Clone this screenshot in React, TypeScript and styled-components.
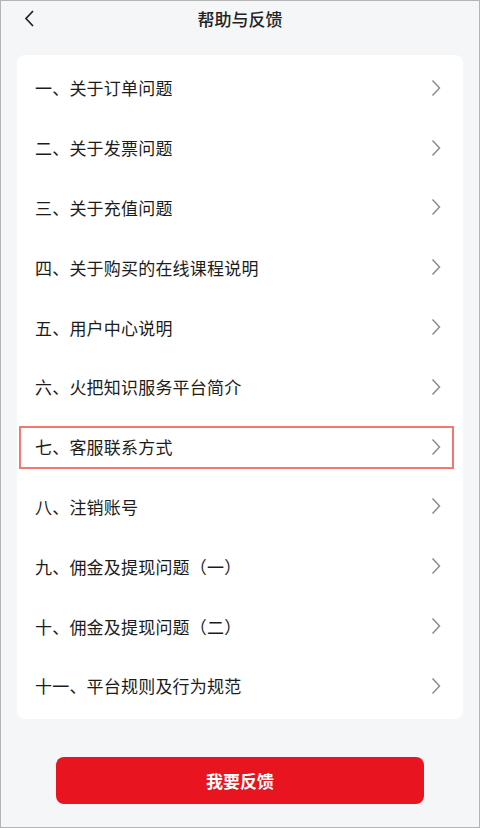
import styled, { createGlobalStyle } from "styled-components";

const GlobalStyle = createGlobalStyle`
  html, body {
    margin: 0;
    padding: 0;
    background: #f5f6f8;
  }
  body {
    font-family: "Noto Sans CJK SC", "Noto Sans", sans-serif;
  }
`;

const Page = styled.div`
  width: 480px;
  height: 828px;
  box-sizing: border-box;
  border: 1px solid #b4b4b4;
  background: #f5f6f8;
  display: flex;
  flex-direction: column;
  overflow: hidden;
`;

const Header = styled.div`
  height: 36px;
  display: flex;
  align-items: center;
  justify-content: center;
  position: relative;
  margin-top: -1px;
`;

const BackBtn = styled.button`
  position: absolute;
  left: 18px;
  top: 7px;
  width: 20px;
  height: 22px;
  border: none;
  background: none;
  padding: 0;
  display: flex;
  align-items: center;
  justify-content: center;
`;

const Title = styled.h1`
  margin: 0;
  font-size: 17px;
  font-weight: 500;
  color: #222;
`;

const Card = styled.ul`
  list-style: none;
  margin: 19px 16px 0 16px;
  padding: 3px 0;
  background: #fff;
  border-radius: 8px;
`;

const Row = styled.li<{ $marked?: boolean }>`
  height: 59.8px;
  display: flex;
  align-items: center;
  justify-content: space-between;
  padding: 0 22px 0 18px;
  position: relative;
  ${(p) =>
    p.$marked &&
    `
    &::after {
      content: "";
      position: absolute;
      left: 2px;
      right: 9px;
      top: 9px;
      bottom: 8px;
      border: 2px solid #f3776f;
    }
  `}
`;

const Label = styled.span`
  font-size: 17px;
  color: #1c1c1c;
  letter-spacing: 0.2px;
`;

const Footer = styled.div`
  display: flex;
  justify-content: center;
  padding-top: 38px;
`;

const SubmitBtn = styled.button`
  width: 368px;
  height: 47px;
  border: none;
  border-radius: 8px;
  background: #e8141f;
  color: #fff;
  font-family: "Noto Sans CJK SC", sans-serif;
  font-size: 17px;
  font-weight: 700;
  cursor: pointer;
`;

const items = [
  "一、关于订单问题",
  "二、关于发票问题",
  "三、关于充值问题",
  "四、关于购买的在线课程说明",
  "五、用户中心说明",
  "六、火把知识服务平台简介",
  "七、客服联系方式",
  "八、注销账号",
  "九、佣金及提现问题（一）",
  "十、佣金及提现问题（二）",
  "十一、平台规则及行为规范",
];

const Chevron = () => (
  <svg width="10" height="18" viewBox="0 0 10 18" fill="none">
    <path d="M1.5 1.5 L8.5 9 L1.5 16.5" stroke="#8c8c8c" strokeWidth="1.5" />
  </svg>
);

export default function App() {
  return (
    <Page>
      <GlobalStyle />
      <Header>
        <BackBtn>
          <svg width="11" height="17" viewBox="0 0 11 17" fill="none">
            <path d="M9 1 L2 8.5 L9 16" stroke="#222" strokeWidth="1.7" />
          </svg>
        </BackBtn>
        <Title>帮助与反馈</Title>
      </Header>
      <Card>
        {items.map((t, i) => (
          <Row key={t} $marked={i === 6}>
            <Label>{t}</Label>
            <Chevron />
          </Row>
        ))}
      </Card>
      <Footer>
        <SubmitBtn>我要反馈</SubmitBtn>
      </Footer>
    </Page>
  );
}
